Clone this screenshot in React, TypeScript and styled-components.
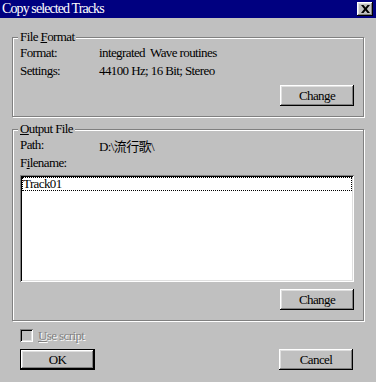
import React from "react";
import styled, {createGlobalStyle, css} from "styled-components";

const GlobalStyle = createGlobalStyle`
  html, body {
    margin: 0;
    padding: 0;
    background: #c0c0c0;
  }
  body {
    font-family: "Liberation Serif", "Noto Sans CJK TC", serif;
    font-size: 13px;
    letter-spacing: -0.6px;
    color: #000;
  }
`;

export default function App() {
  return (
    <Window>
      <GlobalStyle/>
      <TitleBar>
        <Title>Copy selected Tracks</Title>
        <CloseButton aria-label="Close">
          <svg width="9" height="8" viewBox="0 0 9 8">
            <path d="M0 0h2.5L4.5 2.5 6.5 0H9L5.8 4 9 8H6.5L4.5 5.5 2.5 8H0l3.2-4z" fill="#000"/>
          </svg>
        </CloseButton>
      </TitleBar>
      <Body>
        <Group height={80}>
          <Legend>File <u>F</u>ormat</Legend>
          <InfoRow>
            <Label>Format:</Label>
            <Value>integrated&nbsp; Wave routines</Value>
          </InfoRow>
          <InfoRow>
            <Label>Settings:</Label>
            <Value>44100 Hz; 16 Bit; Stereo</Value>
          </InfoRow>
          <ButtonRow top={5}>
            <Button>Chan<u>g</u>e</Button>
          </ButtonRow>
        </Group>
        <Group height={192}>
          <Legend><u>O</u>utput File</Legend>
          <InfoRow>
            <Label>Path:</Label>
            <Value>D:\流行歌\</Value>
          </InfoRow>
          <InfoRow>
            <Label>F<u>i</u>lename:</Label>
          </InfoRow>
          <ListBox>
            <ListItem focused>Track01</ListItem>
          </ListBox>
          <ButtonRow top={7}>
            <Button>Change</Button>
          </ButtonRow>
        </Group>
        <CheckRow>
          <CheckBox/>
          <DisabledText><u>U</u>se script</DisabledText>
        </CheckRow>
        <Footer>
          <Button primary>OK</Button>
          <Button>Cancel</Button>
        </Footer>
      </Body>
    </Window>
  );
}

const Window = styled.div`
  width: 376px;
  height: 382px;
  background: #c0c0c0;
  overflow: hidden;
`;

const TitleBar = styled.div`
  height: 18px;
  background: #000080;
  display: flex;
  align-items: center;
  justify-content: space-between;
  padding: 0 3px 0 2px;
`;

const Title = styled.span`
  color: #fff;
  font-size: 14px;
  letter-spacing: -0.9px;
  line-height: 18px;
  white-space: nowrap;
`;

const CloseButton = styled.div`
  width: 16px;
  height: 14px;
  background: #c0c0c0;
  display: flex;
  align-items: center;
  justify-content: center;
  box-sizing: border-box;
  box-shadow: inset -1px -1px #000, inset 1px 1px #fff, inset -2px -2px #808080, inset 2px 2px #dfdfdf;
`;

const Body = styled.div`
  padding: 19px 12px 0 12px;
  display: flex;
  flex-direction: column;
`;

const Group = styled.div<{height: number}>`
  position: relative;
  box-sizing: border-box;
  width: 352px;
  height: ${({height}) => height}px;
  border: 1px solid #808080;
  box-shadow: inset 1px 1px 0 #fff, 1px 1px 0 #fff;
  padding: 6px 9px 0 7px;
  display: flex;
  flex-direction: column;
  & + & {
    margin-top: 12px;
  }
`;

const Legend = styled.span`
  position: absolute;
  top: -9px;
  left: 5px;
  padding: 0 2px;
  background: #c0c0c0;
  line-height: 16px;
  white-space: nowrap;
`;

const InfoRow = styled.div`
  display: flex;
  height: 18px;
  align-items: center;
  white-space: nowrap;
`;

const Label = styled.span`
  width: 79px;
`;

const Value = styled.span``;

const ButtonRow = styled.div<{top: number}>`
  display: flex;
  justify-content: flex-end;
  margin-top: ${({top}) => top}px;
`;

const Button = styled.div<{primary?: boolean}>`
  width: 74px;
  height: 21px;
  box-sizing: border-box;
  display: flex;
  align-items: center;
  justify-content: center;
  background: #c0c0c0;
  box-shadow: inset -1px -1px #000, inset 1px 1px #fff, inset -2px -2px #808080, inset 2px 2px #dfdfdf;
  ${({primary}) => primary && css`
    border: 1px solid #000;
    width: 75px;
  `}
`;

const ListBox = styled.div`
  margin-top: 3px;
  height: 107px;
  box-sizing: border-box;
  background: #fff;
  padding: 2px;
  box-shadow: inset 1px 1px #808080, inset -1px -1px #fff, inset 2px 2px #000, inset -2px -2px #dfdfdf;
`;

const ListItem = styled.div<{focused?: boolean}>`
  height: 14px;
  line-height: 14px;
  padding-left: 1px;
  box-sizing: border-box;
  ${({focused}) => focused && css`
    outline: 1px dotted #000;
    outline-offset: -1px;
  `}
`;

const CheckRow = styled.div`
  display: flex;
  align-items: center;
  gap: 5px;
  margin-top: 8px;
  padding-left: 8px;
  height: 13px;
`;

const CheckBox = styled.div`
  width: 13px;
  height: 13px;
  box-sizing: border-box;
  background: #c0c0c0;
  box-shadow: inset 1px 1px #808080, inset -1px -1px #fff, inset 2px 2px #000, inset -2px -2px #dfdfdf;
`;

const DisabledText = styled.span`
  color: #808080;
  text-shadow: 1px 1px 0 #fff;
`;

const Footer = styled.div`
  display: flex;
  justify-content: space-between;
  margin-top: 7px;
  padding: 0 11px 0 8px;
`;
